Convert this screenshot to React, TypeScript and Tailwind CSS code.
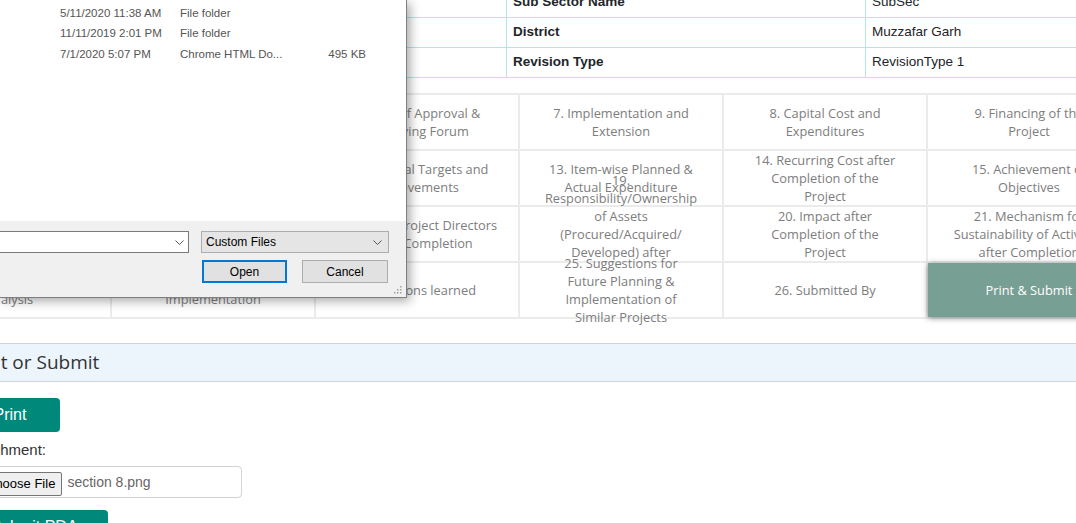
const files = [
  { date: "5/11/2020 11:38 AM", type: "File folder", size: "" },
  { date: "11/11/2019 2:01 PM", type: "File folder", size: "" },
  { date: "7/1/2020 5:07 PM", type: "Chrome HTML Do...", size: "495 KB" },
];

const info = [
  ["Sub Sector Name", "SubSec"],
  ["District", "Muzzafar Garh"],
  ["Revision Type", "RevisionType 1"],
];

const sections: { lines: string[]; action?: boolean }[] = [
  { lines: ["4. Location"] },
  { lines: ["5. Project Cost", "Summary"] },
  { lines: ["6. Date of Approval &", "Approving Forum"] },
  { lines: ["7. Implementation and", "Extension"] },
  { lines: ["8. Capital Cost and", "Expenditures"] },
  { lines: ["9. Financing of the", "Project"] },
  { lines: ["10. Objectives"] },
  { lines: ["11. Scope of the", "Project"] },
  { lines: ["12. Physical Targets and", "Achievements"] },
  { lines: ["13. Item-wise Planned &", "Actual Expenditure"] },
  { lines: ["14. Recurring Cost after", "Completion of the", "Project"] },
  { lines: ["15. Achievement of", "Objectives"] },
  { lines: ["16. Benefits"] },
  { lines: ["17. Employment", "Generated"] },
  { lines: ["18. List of Project Directors", "during Completion"] },
  {
    lines: [
      "19.",
      "Responsibility/Ownership",
      "of Assets",
      "(Procured/Acquired/",
      "Developed) after",
      "Completion of the",
      "Project",
    ],
  },
  { lines: ["20. Impact after", "Completion of the", "Project"] },
  { lines: ["21. Mechanism for", "Sustainability of Activities", "after Completion"] },
  { lines: ["22. Cost Benefit", "Analysis"] },
  { lines: ["23. Issues in", "Implementation"] },
  { lines: ["24. Lessons learned"] },
  { lines: ["25. Suggestions for", "Future Planning &", "Implementation of", "Similar Projects"] },
  { lines: ["26. Submitted By"] },
  { lines: ["Print & Submit"], action: true },
];

function Chevron() {
  return (
    <svg width="9" height="5" viewBox="0 0 9 5" fill="none" stroke="#555" strokeWidth="1">
      <path d="M0.5 0.5 L4.5 4.5 L8.5 0.5" />
    </svg>
  );
}

function Grip() {
  return (
    <svg width="9" height="9" viewBox="0 0 9 9" fill="#a0a0a0">
      <rect x="7" y="1" width="1.5" height="1.5" />
      <rect x="4" y="4" width="1.5" height="1.5" />
      <rect x="7" y="4" width="1.5" height="1.5" />
      <rect x="1" y="7" width="1.5" height="1.5" />
      <rect x="4" y="7" width="1.5" height="1.5" />
      <rect x="7" y="7" width="1.5" height="1.5" />
    </svg>
  );
}

export default function App() {
  return (
    <div className="relative w-[1076px] h-[523px] overflow-hidden bg-white">

      {/* details table */}
      <div className="-mt-[13px] -ml-[100px] flex flex-col w-max font-['Liberation_Sans',Arial,sans-serif] text-[13.5px] text-[#212529]">
        {info.map(([label, value]) => (
          <div key={label} className="flex h-[30px] border-t border-[#b7e4e7]">
            <div className="w-[607px] border-r border-[#b7e4e7]" />
            <div className="w-[359px] border-r border-[#b7e4e7] flex items-center px-[6px] font-bold">
              {label}
            </div>
            <div className="w-[300px] flex items-center px-[6px]">{value}</div>
          </div>
        ))}
        <div className="border-t border-[#b7e4e7]" />
      </div>

      {/* section links */}
      <div className="mt-[15px] -ml-[94px] w-max grid grid-cols-[repeat(6,202px)] gap-[2px] p-[2px] bg-[#ebebeb] font-['Open_Sans',sans-serif] text-[12.8px] leading-[18px]">
        {sections.map((s) => (
          <div
            key={s.lines[0]}
            className={
              s.action
                ? "h-[54px] flex items-center justify-center text-center bg-[#789f94] text-white font-medium shadow-[0_1px_6px_rgba(0,0,0,0.45)]"
                : "h-[54px] flex items-center justify-center text-center bg-white text-[#7d7d7d]"
            }
          >
            <div>
              {s.lines.map((line) => (
                <span key={line} className="block whitespace-nowrap">
                  {line}
                </span>
              ))}
            </div>
          </div>
        ))}
      </div>

      {/* print or submit */}
      <div className="mt-[24px] -ml-[60px] w-[1136px]">
        <div className="h-[39px] flex items-center border-t border-b border-[#cfd4d9] bg-[#edf5fc] pl-[25px] text-[19px] text-[#333] font-['Open_Sans',sans-serif]">
          Print or Submit
        </div>

        <div className="pl-[20px] font-['Liberation_Sans',Arial,sans-serif]">
          <button className="mt-[16px] w-[100px] h-[34px] rounded-[4px] bg-[#00897b] text-white text-[16px] flex items-center justify-center">
            Print
          </button>

          <p className="mt-[6px] ml-[6px] leading-[24px] text-[15px] text-[#333]">Attachment:</p>

          <div className="mt-[4px] w-[282px] h-[32px] border border-[#ced4da] rounded-[4px] flex items-center pl-[18px]">
            <span className="mt-[4px] h-[24px] px-[6px] flex items-center text-[13px] text-black bg-[#efefef] border border-[#767676] rounded-[2px] whitespace-nowrap">
              Choose File
            </span>
            <span className="ml-[5px] text-[14px] text-[#666]">section 8.png</span>
          </div>

          <button className="mt-[12px] w-[148px] h-[34px] rounded-[4px] bg-[#00897b] text-white text-[16px] flex items-center justify-center">
            Submit PDA
          </button>
        </div>
      </div>

      {/* file open dialog */}
      <div className="absolute left-0 top-0 w-[407px] h-[298px] flex flex-col border-r border-b border-[#7f7f7f] shadow-[3px_3px_10px_rgba(0,0,0,0.35)] font-['Liberation_Sans',Arial,sans-serif]">
        <div className="flex-1 bg-white pt-[3px] text-[11.5px] text-[#555]">
          {files.map((f) => (
            <div key={f.date} className="flex items-center h-[20.5px]">
              <span className="ml-[60px] w-[120px]">{f.date}</span>
              <span className="w-[120px]">{f.type}</span>
              <span className="w-[66px] text-right">{f.size}</span>
            </div>
          ))}
        </div>

        <div className="relative h-[76px] bg-[#f0f0f0] pt-[10px] text-[12px] text-black">
          <div className="flex">
            <div className="w-[189px] h-[22px] border border-l-0 border-[#7a7a7a] bg-white flex items-center justify-end pr-[4px]">
              <Chevron />
            </div>
            <div className="ml-[12px] w-[188px] h-[22px] border border-[#adadad] bg-[#e5e5e5] flex items-center justify-between pl-[4px] pr-[6px]">
              Custom Files
              <Chevron />
            </div>
          </div>
          <div className="flex mt-[7px] ml-[202px] gap-[15px]">
            <div className="w-[85px] h-[23px] border-2 border-[#0078d7] bg-[#e1e1e1] flex items-center justify-center">
              Open
            </div>
            <div className="w-[86px] h-[23px] border border-[#adadad] bg-[#e1e1e1] flex items-center justify-center">
              Cancel
            </div>
          </div>
          <div className="absolute right-[4px] bottom-[3px]">
            <Grip />
          </div>
        </div>
      </div>
    </div>
  );
}
